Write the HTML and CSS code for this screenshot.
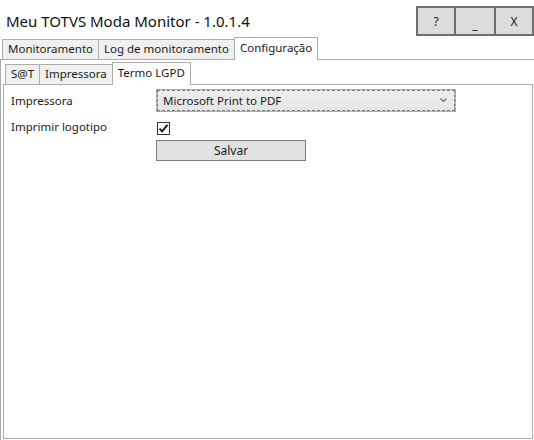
FILE: index.html
```html
<!DOCTYPE html>
<html lang="pt-BR">
<head>
  <meta charset="UTF-8">
  <title>Meu TOTVS Moda Monitor</title>
  <link rel="stylesheet" href="styles.css">
</head>
<body>
  <div class="titlebar">
    <span class="title">Meu TOTVS Moda Monitor - 1.0.1.4</span>
    <div class="win-buttons">
      <button class="win-btn">?</button>
      <button class="win-btn win-btn-min">_</button>
      <button class="win-btn win-btn-close">X</button>
    </div>
  </div>

  <div class="tabs tabs-main">
    <div class="tab">Monitoramento</div>
    <div class="tab">Log de monitoramento</div>
    <div class="tab active">Configuração</div>
  </div>

  <div class="panel panel-main">
    <div class="tabs tabs-sub">
      <div class="tab">S@T</div>
      <div class="tab">Impressora</div>
      <div class="tab active">Termo LGPD</div>
    </div>

    <div class="panel panel-sub">
      <div class="form">
        <label class="form-label">Impressora</label>
        <div class="select">
          <span>Microsoft Print to PDF</span>
          <svg class="chevron" width="7" height="5" viewBox="0 0 7 5">
            <polyline points="0.5,0.5 3.5,3.5 6.5,0.5" fill="none" stroke="#6a6a6a" stroke-width="1.2"/>
          </svg>
        </div>

        <label class="form-label form-label-check">Imprimir logotipo</label>
        <span class="check">
          <svg width="11" height="11" viewBox="0 0 11 11">
            <polyline points="1.5,5.5 4,8.3 9.5,1.8" fill="none" stroke="#111" stroke-width="1.8"/>
          </svg>
        </span>

        <span></span>
        <button class="btn">Salvar</button>
      </div>
    </div>
  </div>
</body>
</html>
```

FILE: styles.css
```css
body {
  margin: 0;
  width: 534px;
  height: 440px;
  overflow: hidden;
  background: #fff;
  font-family: 'Segoe UI', 'Noto Sans', sans-serif;
  font-size: 11.5px;
  color: #1a1a1a;
}

/* barra de titulo */
.titlebar {
  display: flex;
  justify-content: space-between;
  height: 37px;
}

.title {
  padding: 11px 0 0 6px;
  font-size: 15px;
  line-height: 20px;
  color: #111;
}

.win-buttons {
  display: flex;
  margin-top: 6px;
  height: 30px;
}

.win-btn {
  width: 40px;
  height: 30px;
  padding: 0;
  background: #dcdcdc;
  border: 2px solid #6f6f6f;
  font-family: inherit;
  font-size: 12px;
  color: #222;
}

.win-btn + .win-btn {
  border-left: 0;
}

.win-btn-min {
  padding-top: 6px;
}

.win-btn-close {
  width: 38px;
}

/* abas */
.tabs {
  display: flex;
  align-items: flex-end;
  height: 22px;
  padding-left: 2px;
}

.tab {
  position: relative;
  height: 20px;
  box-sizing: border-box;
  padding: 0 5px;
  line-height: 18px;
  background: #f0f0f0;
  border: 1px solid #acacac;
  border-bottom: 0;
  white-space: nowrap;
}

.tab + .tab {
  margin-left: -1px;
}

.tab.active {
  z-index: 1;
  height: 23px;
  margin-bottom: -1px;
  padding-top: 1px;
  background: #fff;
}

.panel {
  box-sizing: border-box;
  border: 1px solid #acacac;
  background: #fff;
}

.panel-main {
  width: 536px;
  height: 390px;
  padding: 2px 2px 0 2px;
}

.panel-sub {
  width: 530px;
  height: 355px;
  padding: 4px 0 0 7px;
}

/* formulario */
.form {
  display: grid;
  grid-template-columns: 145px 300px;
  align-items: center;
}

.form-label {
  line-height: 16px;
}

.form-label-check {
  margin-top: 7px;
}

.select {
  display: flex;
  justify-content: space-between;
  align-items: center;
  box-sizing: border-box;
  height: 23px;
  padding: 0 6px;
  background: linear-gradient(#efefef, #e4e4e4);
  border: 1px solid #acacac;
  outline: 1px dashed #7a7a7a;
  outline-offset: -2px;
}

.chevron {
  margin-right: 2px;
}

.check {
  display: flex;
  align-items: center;
  justify-content: center;
  width: 13px;
  height: 13px;
  box-sizing: border-box;
  margin: 9px 0 0 1px;
  border: 1px solid #333;
  background: #fff;
}

.btn {
  width: 150px;
  height: 21px;
  margin-top: 5px;
  padding: 0;
  background: #e1e1e1;
  border: 1px solid #7a7a7a;
  font-family: inherit;
  font-size: 12px;
  color: #1a1a1a;
}
```
